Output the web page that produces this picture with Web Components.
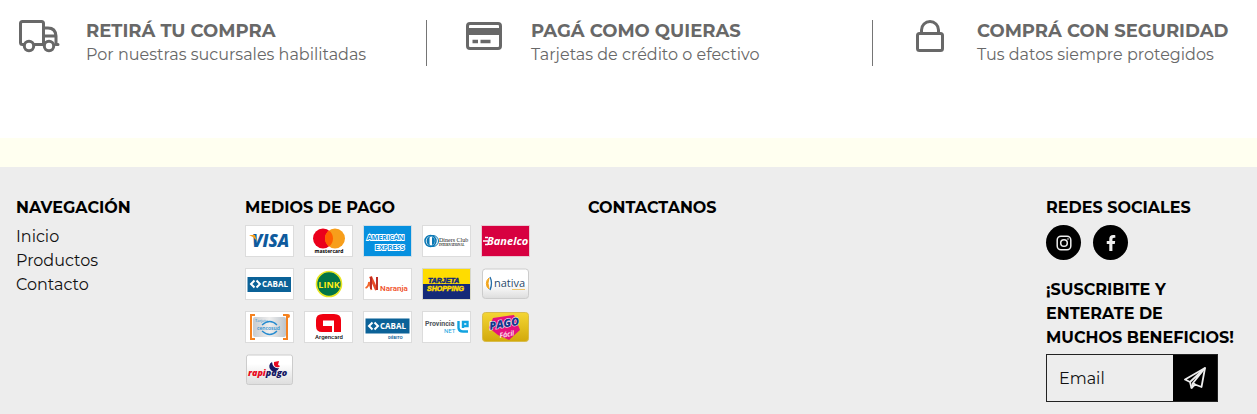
<!DOCTYPE html>
<html lang="es">
<head>
<meta charset="utf-8">
<meta name="viewport" content="width=device-width, initial-scale=1">
<title>Tienda</title>
<style>
  body { margin: 0; font-family: Montserrat, Inter, sans-serif; background: #fffff0; }
</style>
</head>
<body>
<store-page></store-page>

<template id="t-page">
  <style>
    :host { display: flex; flex-direction: column; min-height: 100vh; overflow-x: hidden; }
    .benefits { display: grid; grid-template-columns: 426fr 446fr 385fr; background: #fff; padding: 20px 0 72px; }
    .benefits svg { fill: none; stroke: #686868; stroke-width: 3; display: block; flex: none; }
    footer { flex: 1; margin-top: 29px; background: #ededed; padding: 29px 0 12px 16px; display: grid; grid-template-columns: 229fr 343fr 458fr 211fr; align-items: start; }
  </style>
  <section class="benefits">
    <benefit-item first>
      <svg slot="icon" width="42" height="34" viewBox="0 0 42 34" stroke-linejoin="round" stroke-linecap="round"><path d="M6 24.500H4.500Q2.500 24.500 2.500 22.500V3.500Q2.500 1.500 4.500 1.500H23.500Q25.500 1.500 25.500 3.500V24.500M25.500 8H30Q37.500 8 38 16V24.500H40M25.500 16H38M16.500 24.500H26"/><circle cx="11" cy="26" r="4.700"/><circle cx="31" cy="26" r="4.700"/></svg>
      <span slot="title">RETIRÁ TU COMPRA</span>Por nuestras sucursales habilitadas
    </benefit-item>
    <benefit-item>
      <svg slot="icon" width="38" height="34" viewBox="0 0 38 34"><rect x="2.500" y="3.500" width="33" height="25" rx="2.500"/><path d="M2 11.500H36" stroke-width="7"/><path d="M7.500 21.500H13M15.500 21.500H25.500" stroke-width="3.600"/></svg>
      <span slot="title">PAGÁ COMO QUIERAS</span>Tarjetas de crédito o efectivo
    </benefit-item>
    <benefit-item>
      <svg slot="icon" width="32" height="34" viewBox="0 0 32 34"><rect x="3.500" y="13.500" width="25" height="17" rx="2"/><path d="M7.500 13.500V10a8.500 8.500 0 0 1 17 0V13.500"/></svg>
      <span slot="title">COMPRÁ CON SEGURIDAD</span>Tus datos siempre protegidos
    </benefit-item>
  </section>
  <footer>
    <footer-column heading="NAVEGACIÓN"><site-nav></site-nav></footer-column>
    <footer-column heading="MEDIOS DE PAGO"><payment-logos></payment-logos></footer-column>
    <footer-column heading="CONTACTANOS"></footer-column>
    <footer-column heading="REDES SOCIALES"><social-links></social-links><newsletter-form></newsletter-form></footer-column>
  </footer>
</template>

<template id="t-benefit">
  <style>
    :host { display: flex; gap: 27px; padding-left: 37px; border-left: 1px solid #757575; color: #686868; white-space: nowrap; min-width: 0; }
    :host([first]) { border-left: 0; padding-left: 19px; }
    .icon { width: 40px; height: 32px; display: flex; justify-content: center; flex: none; }
    h2, p { margin: 0; line-height: 23px; }
    h2 { font-size: 18px; font-weight: 700; }
    p { font-size: 16px; font-weight: 400; }
  </style>
  <div class="icon"><slot name="icon"></slot></div>
  <div><h2><slot name="title"></slot></h2><p><slot></slot></p></div>
</template>

<template id="t-column">
  <style>
    :host { display: block; min-width: 0; }
    h3 { margin: 0 0 5px; font-size: 16px; line-height: 24px; font-weight: 700; color: #000; }
  </style>
  <h3></h3><slot></slot>
</template>

<template id="t-nav">
  <style>
    :host { display: block; }
    nav { display: flex; flex-direction: column; align-items: flex-start; }
    a { color: #111; text-decoration: none; font-size: 16px; font-weight: 400; line-height: 24px; }
  </style>
  <nav aria-label="Navegación"><a href="#inicio">Inicio</a><a href="#productos">Productos</a><a href="#contacto">Contacto</a></nav>
</template>

<template id="t-payments">
  <style>
    :host { display: grid; grid-template-columns: repeat(5, 49px); gap: 11px 10px; }
    svg { display: block; width: 49px; height: 32px; }
    text { font-family: "Open Sans", sans-serif; }
    .card { fill: #fff; stroke: #dcdcdc; }
  </style>
  <svg viewBox="0 0 49 32" role="img" aria-label="Visa"><rect class="card" x=".5" y=".5" width="48" height="31"/><text x="7" y="22" font-size="17" font-weight="800" font-style="italic" fill="#0e5a9d">VISA</text><path d="M4 10H10L12 16Q9 12 4 10Z" fill="#f6a01a"/></svg>
  <svg viewBox="0 0 49 32" role="img" aria-label="Mastercard"><rect class="card" x=".5" y=".5" width="48" height="31"/><circle cx="19" cy="13.500" r="10" fill="#eb001b"/><circle cx="31" cy="13.500" r="10" fill="#f79e1b"/><path d="M25 5.500a10 10 0 0 1 0 16a10 10 0 0 1 0-16" fill="#ff5f00"/><text x="25" y="28" font-size="5" font-weight="700" text-anchor="middle">mastercard</text></svg>
  <svg viewBox="0 0 49 32" role="img" aria-label="American Express"><rect x=".5" y=".5" width="48" height="31" fill="#0690df" stroke="#cfdde6"/><g font-size="7" font-weight="700" fill="#0690df" stroke="#fff" stroke-width="1.800" paint-order="stroke"><text x="4" y="15">AMERICAN</text><text x="12" y="24.500">EXPRESS</text></g></svg>
  <svg viewBox="0 0 49 32" role="img" aria-label="Diners Club International"><rect class="card" x=".5" y=".5" width="48" height="31"/><circle cx="8.500" cy="16" r="5.500" fill="#fff" stroke="#0a78b5" stroke-width="1.500"/><circle cx="11" cy="16" r="5.500" fill="none" stroke="#0a78b5"/><path d="M7.500 12V20A4.200 4.200 0 0 1 7.500 12M10 12V20A4.200 4.200 0 0 0 10 12" fill="#0a78b5"/><text x="17" y="16.500" font-size="6" fill="#222" style="font-family:'Liberation Serif',serif">Diners Club</text><text x="17" y="20.500" font-size="3" font-weight="700" fill="#222" style="font-family:'Liberation Serif',serif">INTERNATIONAL</text></svg>
  <svg viewBox="0 0 49 32" role="img" aria-label="Banelco"><rect x=".5" y=".5" width="48" height="31" fill="#d70040" stroke="#e8c8d2"/><path d="M4 12.500H7M2 16H7M4 19.500H7" stroke="#fff" stroke-width="1.400"/><text x="6" y="20" font-size="11" font-weight="700" font-style="italic" fill="#fff">Banelco</text></svg>

  <svg viewBox="0 0 49 32" role="img" aria-label="Cabal"><rect class="card" x=".5" y=".5" width="48" height="31"/><rect x="2.500" y="9" width="43.500" height="15" fill="#0b6298"/><path d="M9.500 12.500L6 16L9.500 19.500M11.500 12.500L15 16L11.500 19.500" fill="none" stroke="#fff" stroke-width="2"/><text x="17" y="19" font-size="8" font-weight="700" fill="#fff">CABAL</text></svg>
  <svg viewBox="0 0 49 32" role="img" aria-label="Link"><rect class="card" x=".5" y=".5" width="48" height="31"/><circle cx="25" cy="16" r="12.500" fill="#007447" stroke="#e7e522" stroke-width="1.600"/><text x="25" y="19.500" font-size="9" font-weight="700" text-anchor="middle" fill="#ffed16">LINK</text></svg>
  <svg viewBox="0 0 49 32" role="img" aria-label="Naranja"><rect class="card" x=".5" y=".5" width="48" height="31"/><path d="M2.500 20Q5.500 19 6 14L8.500 22" fill="none" stroke="#f2652b" stroke-width="1.800"/><path d="M7.500 8.500L13.500 22" fill="none" stroke="#e94c27" stroke-width="3"/><path d="M8 9V21M14 9V22" fill="none" stroke="#bd2d24" stroke-width="2"/><text x="17" y="22.500" font-size="8" font-weight="600" fill="#f0532b" style="font-family:Roboto,sans-serif">Naranja</text></svg>
  <svg viewBox="0 0 49 32" role="img" aria-label="Tarjeta Shopping"><rect x=".5" y=".5" width="48" height="31" fill="#ffdc00" stroke="#d8d8cb"/><path d="M1 16H48V31H1Z" fill="#152a78"/><g font-weight="700" font-style="italic" font-size="7"><text x="6" y="15" fill="#152a78" stroke="#152a78" stroke-width=".5" style="font-family:'Liberation Sans',sans-serif">TARJETA</text><text x="5" y="23" fill="#ffdc00" stroke="#ffdc00" stroke-width=".5" style="font-family:'Liberation Sans',sans-serif">SHOPPING</text></g></svg>
  <svg viewBox="0 0 49 32" role="img" aria-label="Nativa"><defs><linearGradient id="n" x2="0" y2="1"><stop offset=".5" stop-color="#fff"/><stop offset="1" stop-color="#ddd"/></linearGradient></defs><rect x="1.500" y="1" width="46" height="29.500" rx="3" fill="url(#n)" stroke="#ccc"/><path d="M8 10A7 7 0 0 0 8 21Q6 15 8 10" fill="#f1a51d" stroke="#f1a51d"/><path d="M9 9Q12 15 9 22" fill="none" stroke="#236ca7" stroke-width="1.300"/><text x="13" y="18.500" font-size="11" font-weight="500" fill="#29496b">nativa</text><path d="M31 21.500H44" stroke="#edc46a"/></svg>

  <svg viewBox="0 0 49 32" role="img" aria-label="Cencosud"><defs><linearGradient id="c"><stop stop-color="#c6cbd0"/><stop offset=".5" stop-color="#eee"/><stop offset="1" stop-color="#bcc4cb"/></linearGradient></defs><rect class="card" x=".5" y=".5" width="48" height="31"/><rect x="8" y="6" width="33" height="20" rx="2" fill="url(#c)"/><path d="M10 4H6V28H10M38 28H42V4H38" fill="none" stroke="#f58220" stroke-width="2"/><circle cx="43" cy="5" r="2" fill="#f58220"/><path d="M17 14Q25 7 32 14M17 20Q25 27 32 20" fill="none" stroke="#248bd0" stroke-width="1.300"/><text x="10" y="10.500" font-size="4" fill="#248bd0">Tarjeta</text><text x="12" y="19" font-size="5" font-weight="600" fill="#248bd0">cencosud</text></svg>
  <svg viewBox="0 0 49 32" role="img" aria-label="Argencard"><rect class="card" x=".5" y=".5" width="48" height="31"/><path d="M12 9Q12 3 19 3H30Q37 3 37 9V21H30V10H19V15H28V21H18Q12 21 12 15Z" fill="#f00010"/><path d="M19 9.500H30V15H19Z" fill="#fff"/><text x="25" y="28" font-size="6" font-weight="500" text-anchor="middle" fill="#111" style="font-family:Roboto,sans-serif">Argencard</text></svg>
  <svg viewBox="0 0 49 32" role="img" aria-label="Cabal Débito"><rect class="card" x=".5" y=".5" width="48" height="31"/><rect x="2.500" y="7.500" width="44" height="15" fill="#0b6298"/><path d="M9.500 11.500L6 15L9.500 18.500M11.500 11.500L15 15L11.500 18.500" fill="none" stroke="#fff" stroke-width="2"/><text x="17" y="18" font-size="8" font-weight="700" fill="#fff">CABAL</text><text x="25" y="27.500" font-size="4" font-weight="700" fill="#0b6298">DÉBITO</text></svg>
  <svg viewBox="0 0 49 32" role="img" aria-label="Provincia Net"><rect class="card" x=".5" y=".5" width="48" height="31"/><text x="3" y="15" font-size="7" font-weight="700" fill="#4f565c" style="font-family:Roboto,sans-serif">Provincia</text><text x="22" y="22" font-size="6" fill="#12a3e0" style="font-family:Roboto,sans-serif">NET</text><path d="M36.500 10V17Q37 20.500 41 20.500H46M41 17V11H45.500V15H41" fill="none" stroke="#12a3e0" stroke-width="2.400"/></svg>
  <svg viewBox="0 0 49 32" role="img" aria-label="Pago Fácil"><defs><linearGradient id="p" x2="0" y2="1"><stop stop-color="#f4d634"/><stop offset="1" stop-color="#d2a90a"/></linearGradient></defs><rect x="1.500" y="1.500" width="46" height="29" rx="3" fill="url(#p)" stroke="#d8bc4c"/><path d="M12 7L33 4L39 19L28 29L17 24L8 17Z" fill="#e5127d"/><text x="9" y="19" transform="rotate(-10 9 19)" font-size="11" font-weight="800" font-style="italic" fill="#12388e" stroke="#fff" stroke-width="1" paint-order="stroke">PAGO</text><text x="19" y="27" transform="rotate(-10 19 27)" font-size="7" font-weight="600" font-style="italic" fill="#fff">Fácil</text></svg>

  <svg viewBox="0 0 49 32" role="img" aria-label="Rapipago"><defs><linearGradient id="r" x2="0" y2="1"><stop offset=".3" stop-color="#fff"/><stop offset="1" stop-color="#ddd"/></linearGradient></defs><rect x="1.500" y="1" width="46" height="29.500" rx="2" fill="url(#r)" stroke="#ccc"/><path d="M27 8A5 5 0 1 0 34 14Q28 15 27 8" fill="#151763"/><path d="M29 8L34 7L33 11Q36 12 34 13Q30 14 29 11Z" fill="#e90921"/><text x="3" y="22" font-size="9" font-weight="800" font-style="italic" fill="#e90921">rapi<tspan fill="#151763">pago</tspan></text></svg>
</template>

<template id="t-social">
  <style>
    :host { display: flex; gap: 12px; margin-bottom: 18px; }
    a { width: 35px; height: 35px; border-radius: 50%; background: #000; display: grid; place-items: center; }
  </style>
  <a href="#instagram" aria-label="Instagram"><svg width="16" height="16" viewBox="0 0 16 16" fill="none" stroke="#eee" stroke-width="1.500"><rect x="1.200" y="1.200" width="13.600" height="13.600" rx="3.800"/><circle cx="8" cy="8" r="3.300"/><circle cx="12" cy="4" r=".8" fill="#eee" stroke="none"/></svg></a>
  <a href="#facebook" aria-label="Facebook"><svg width="16" height="16" viewBox="0 0 320 512" fill="#eee"><path d="M280 288l14-93h-89v-60c0-25 12-50 52-50h41V7s-37-7-72-7c-73 0-121 44-121 125v70H24v93h81v224h100V288z"/></svg></a>
</template>

<template id="t-newsletter">
  <style>
    :host { display: block; }
    label { display: block; max-width: 200px; font-size: 16px; line-height: 24px; font-weight: 700; color: #000; margin-bottom: 4px; }
    .row { display: flex; max-width: 172px; height: 48px; box-sizing: border-box; border: 1px solid #222; }
    input { flex: 1; min-width: 0; border: 0; border-radius: 0; background: transparent; padding: 0 12px; font: 400 16px Montserrat, Inter, sans-serif; color: #111; }
    input::placeholder { color: #111; opacity: 1; }
    button { width: 44px; border: 0; padding: 0; background: #000; display: grid; place-items: center; }
  </style>
  <form>
    <label for="email">¡SUSCRIBITE Y<br>ENTERATE DE<br>MUCHOS BENEFICIOS!</label>
    <div class="row"><input id="email" type="email" placeholder="Email"><button type="button" aria-label="Enviar"><svg width="24" height="24" viewBox="0 0 24 24" fill="none" stroke="#eee" stroke-width="1.800" stroke-linejoin="round"><path d="M22 2L2 13.500L7 16L8.500 22L12 18.500L18.500 21Z"/><path d="M22 2L7 16M22 2L10 17L8.500 22M10 17L12 18.500"/></svg></button></div>
  </form>
</template>

<script>
  class TemplateElement extends HTMLElement {
    constructor() {
      super();
      const source = document.getElementById(this.constructor.template);
      this.attachShadow({ mode: 'open' }).append(source.content.cloneNode(true));
    }
  }
  class FooterColumn extends TemplateElement {
    static template = 't-column';
    connectedCallback() {
      this.shadowRoot.querySelector('h3').textContent = this.getAttribute('heading');
    }
  }
  customElements.define('benefit-item', class extends TemplateElement { static template = 't-benefit'; });
  customElements.define('footer-column', FooterColumn);
  customElements.define('site-nav', class extends TemplateElement { static template = 't-nav'; });
  customElements.define('payment-logos', class extends TemplateElement { static template = 't-payments'; });
  customElements.define('social-links', class extends TemplateElement { static template = 't-social'; });
  customElements.define('newsletter-form', class extends TemplateElement { static template = 't-newsletter'; });
  customElements.define('store-page', class extends TemplateElement { static template = 't-page'; });
</script>
</body>
</html>
